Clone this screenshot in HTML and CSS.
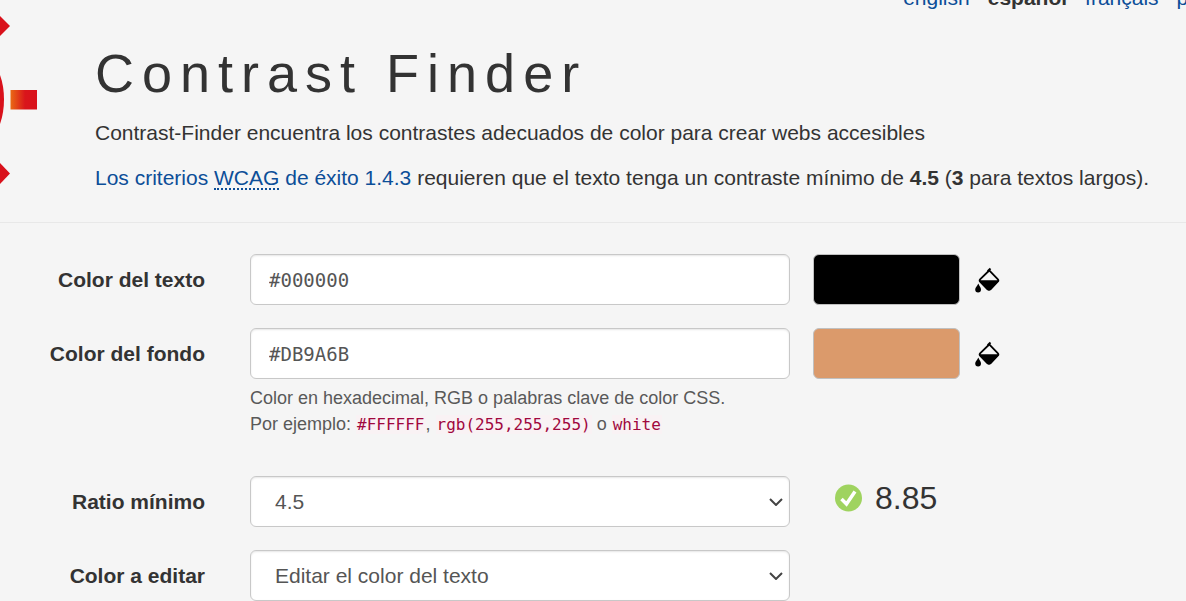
FILE: index.html
```html
<!DOCTYPE html>
<html lang="es">
<head>
<meta charset="utf-8">
<title>Contrast Finder</title>
<link rel="stylesheet" href="styles.css">
</head>
<body>
<svg class="sprite" aria-hidden="true">
  <symbol id="bucket" viewBox="0 0 26 28">
    <path d="M14.200 4.500 5.300 13.200Q4 14.500 5.300 15.800L12.300 23Q14 24.500 15.700 23L22.700 15.700Q24 14.400 22.700 13.100L14 4.200" fill="none" stroke="#000" stroke-width="1.800"/>
    <path d="M12.700 5.300 15.500 2.500" stroke="#000" stroke-width="2"/>
    <path d="M4.500 14.200H23.500L23 15.800 15.800 23.500Q14 24.800 12.200 23.500L5 16Z"/>
    <path d="M3.300 17.500C4.300 20 6 21.500 6 23.500A2.900 2.900 0 0 1 .2 23.500C.2 21.500 2.300 20 3.300 17.500Z"/>
  </symbol>
</svg>
<header class="header">
  <svg class="logo" viewBox="0 0 40 193" role="img" aria-label="Contrast Finder">
    <defs>
      <linearGradient id="ray"><stop offset="0" stop-color="#ea6a15"/><stop offset=".55" stop-color="#d9151b"/><stop offset="1" stop-color="#d9111b"/></linearGradient>
    </defs>
    <g fill="#d9111b">
      <path d="M0 16 10 26 0 36Z"/>
      <path d="M0 163 10 173.500 0 184Z"/>
      <path d="M0 75Q4 86 4 99.500T0 124Z"/>
    </g>
    <path d="M10.500 90H37V109.500H10.500Z" fill="url(#ray)"/>
  </svg>
  <div class="intro">
    <nav class="languages">
      <a href="#en">english</a>
      <strong>español</strong>
      <a href="#fr">français</a>
      <a href="#pt">português</a>
    </nav>
    <h1 class="title">Contrast Finder</h1>
    <p class="lead">Contrast-Finder encuentra los contrastes adecuados de color para crear webs accesibles</p>
    <p class="lead"><a href="#wcag">Los criterios <abbr title="Web Content Accessibility Guidelines">WCAG</abbr> de éxito 1.4.3</a> requieren que el texto tenga un contraste mínimo de <strong>4.5</strong> (<strong>3</strong> para textos largos).</p>
  </div>
</header>
<main>
  <form class="form">
    <div class="row">
      <label class="label" for="foreground">Color del texto</label>
      <input class="control code-input" id="foreground" type="text" value="#000000">
      <div class="side">
        <span class="swatch swatch-text"></span>
        <button class="picker" type="button" aria-label="Elegir el color del texto"><svg class="bucket"><use href="#bucket"/></svg></button>
      </div>
    </div>
    <div class="row">
      <label class="label" for="background">Color del fondo</label>
      <input class="control code-input" id="background" type="text" value="#DB9A6B" aria-describedby="help">
      <div class="side">
        <span class="swatch swatch-background"></span>
        <button class="picker" type="button" aria-label="Elegir el color del fondo"><svg class="bucket"><use href="#bucket"/></svg></button>
      </div>
      <p class="help" id="help">Color en hexadecimal, RGB o palabras clave de color CSS.<br>Por ejemplo: <code>#FFFFFF</code>, <code>rgb(255,255,255)</code> o <code>white</code></p>
    </div>
    <div class="row row-ratio">
      <label class="label" for="ratio">Ratio mínimo</label>
      <div class="select-box">
        <select class="control select" id="ratio"><option>4.5</option><option>3</option></select>
        <svg class="chevron" viewBox="0 0 14 8" aria-hidden="true"><path d="M1 1 7 7 13 1"/></svg>
      </div>
      <output class="result" for="ratio">
        <svg class="check" viewBox="0 0 28 28" aria-hidden="true"><circle cx="13.500" cy="14" r="13.500" fill="#9fd35f"/><path d="M6.500 15 11.500 20 20 7.500" fill="none" stroke="#fff" stroke-width="3.500"/></svg>
        8.85
      </output>
    </div>
    <div class="row">
      <label class="label" for="edit">Color a editar</label>
      <div class="select-box">
        <select class="control select" id="edit"><option>Editar el color del texto</option><option>Editar el color del fondo</option></select>
        <svg class="chevron" viewBox="0 0 14 8" aria-hidden="true"><path d="M1 1 7 7 13 1"/></svg>
      </div>
    </div>
  </form>
</main>
</body>
</html>
```
FILE: styles.css
```css
* {
  box-sizing: border-box;
}

body {
  margin: 0;
  background: #f5f5f5;
  color: #333;
  font-family: "Liberation Sans", Arial, sans-serif;
  font-size: 21px;
  line-height: 30px;
  overflow: hidden;
}

a {
  color: #0c4e98;
  text-decoration: none;
}

.sprite {
  position: absolute;
  width: 0;
  height: 0;
}

.header {
  display: flex;
  gap: 55px;
  padding-bottom: 29px;
  border-bottom: 1px solid #e8e8e8;
  overflow: hidden;
}

.logo {
  flex: none;
  width: 40px;
  height: 193px;
}

.intro {
  flex: 1;
  min-width: 0;
}

.languages {
  display: flex;
  justify-content: flex-end;
  gap: 18px;
  margin: -17px -84px 30px 0;
}

.title {
  margin: 0;
  font-size: 54px;
  font-weight: 400;
  line-height: 60px;
  letter-spacing: 8px;
}

.lead {
  margin: 15px 0 0;
}

abbr {
  text-decoration: none;
  border-bottom: 2px dotted #0c4e98;
  line-height: 20px;
  display: inline-block;
}

.form {
  display: grid;
  gap: 23px;
  padding-top: 31px;
}

.row {
  display: grid;
  grid-template-columns: 205px minmax(0, 1fr) 351px;
  column-gap: 45px;
  align-items: center;
}

.row-ratio {
  padding-top: 15px;
}

.label {
  font-weight: 700;
  text-align: right;
}

.control {
  width: 100%;
  height: 51px;
  padding: 0 18px;
  border: 1px solid #c8c8c8;
  border-radius: 6px;
  background: #fff;
  box-shadow: inset 0 1px 2px rgba(0, 0, 0, .1);
  color: #555;
  font: inherit;
}

.code-input {
  font-family: "DejaVu Sans Mono", monospace;
  font-size: 19px;
}

.select-box {
  display: grid;
  align-items: center;
}

.select-box > * {
  grid-area: 1 / 1;
}

.select {
  appearance: none;
  padding: 0 24px;
}

.chevron {
  width: 14px;
  height: 8px;
  margin-right: 7px;
  justify-self: end;
  fill: none;
  stroke: #444;
  stroke-width: 2;
  pointer-events: none;
}

.side {
  display: flex;
  align-items: center;
  gap: 15px;
  margin-left: -22px;
}

.swatch {
  width: 147px;
  height: 51px;
  border: 1px solid #c0c0c0;
  border-radius: 6px;
}

.swatch-text {
  background: #000;
}

.swatch-background {
  background: #db9a6b;
}

.picker {
  display: flex;
  padding: 0;
  border: 0;
  background: none;
}

.bucket {
  width: 26px;
  height: 28px;
}

.help {
  grid-column: 2 / -1;
  margin: 6px 0 0;
  color: #595959;
  font-size: 18px;
  line-height: 26px;
}

code {
  padding: 0 1px;
  background: #f9f2f4;
  color: #a0083e;
  font-family: "DejaVu Sans Mono", monospace;
  font-size: 16px;
}

.result {
  display: flex;
  align-items: center;
  gap: 12px;
  padding-bottom: 8px;
  font-size: 32px;
}

.check {
  width: 28px;
  height: 28px;
}
```
